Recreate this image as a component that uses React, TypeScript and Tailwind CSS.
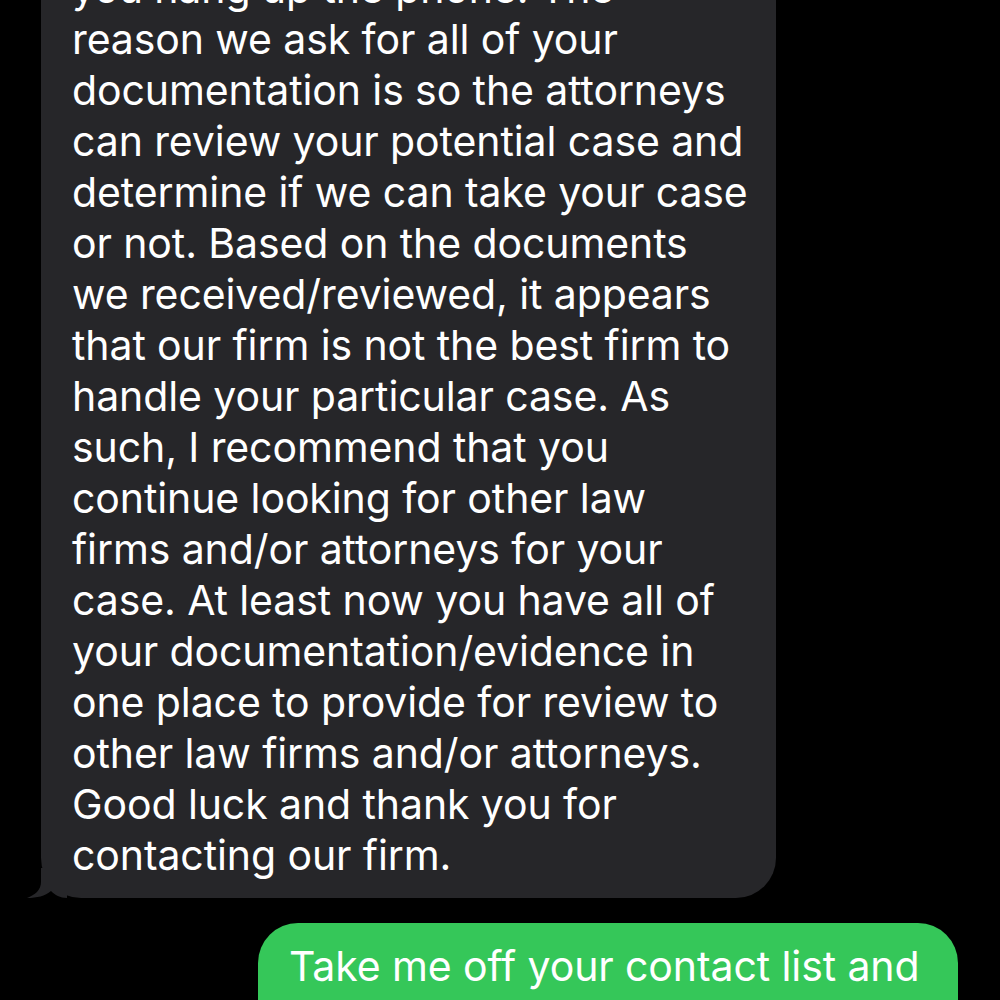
import React from 'react';

const LINES = [
  'you hang up the phone. The',
  'reason we ask for all of your',
  'documentation is so the attorneys',
  'can review your potential case and',
  'determine if we can take your case',
  'or not. Based on the documents',
  'we received/reviewed, it appears',
  'that our firm is not the best firm to',
  'handle your particular case. As',
  'such, I recommend that you',
  'continue looking for other law',
  'firms and/or attorneys for your',
  'case. At least now you have all of',
  'your documentation/evidence in',
  'one place to provide for review to',
  'other law firms and/or attorneys.',
  'Good luck and thank you for',
  'contacting our firm.',
];

const font = { fontFamily: 'Inter, "Noto Sans", sans-serif' };

function Tail() {
  // little hook under the incoming bubble
  return (
    <svg className="absolute left-[-14px] bottom-0" width="40" height="30" viewBox="0 0 40 30">
      <path d="M14 0 L14 14 C14 22 8 27 0 30 C10 30 18 28 24 23 C28 27 33 30 40 30 L40 0 Z" fill="#262629" />
    </svg>
  );
}

export default function App() {
  return (
    <div className="h-screen w-full overflow-hidden bg-black text-white" style={font}>
      <div className="-mt-[47px] flex flex-col">
        <div className="relative ml-[41px] w-[735px]">
          <div className="rounded-[40px] bg-[#262629] pl-[31px] pr-4 pt-[10px] pb-[17px] text-[41px] leading-[51px] tracking-[-0.1px]">
            {LINES.map((l) => (
              <div key={l} className="whitespace-nowrap">
                {l}
              </div>
            ))}
          </div>
          <Tail />
        </div>

        <div className="mt-[25px] ml-[258px] w-[700px] rounded-[40px] bg-[#35c759] pl-[31px] pt-[18px] pb-4 text-[41px] leading-[51px] tracking-[-0.1px]">
          <div className="whitespace-nowrap">Take me off your contact list and</div>
          <div className="whitespace-nowrap">stop texting me, I'm not interested</div>
        </div>
      </div>
    </div>
  );
}
